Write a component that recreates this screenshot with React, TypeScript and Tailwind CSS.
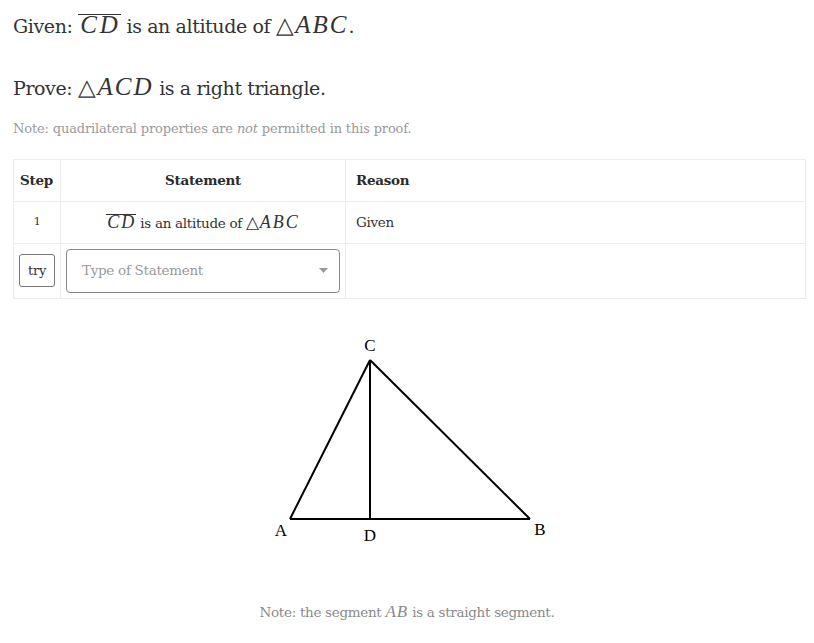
import React from 'react';

const serif = { fontFamily: '"DejaVu Serif", "Liberation Serif", serif' };

function M({ children }: { children: React.ReactNode }) {
  return (
    <span className="italic" style={{ fontFamily: '"Liberation Serif", serif' }}>
      {children}
    </span>
  );
}

function Tri({ size }: { size: string }) {
  return (
    <span style={{ fontFamily: '"DejaVu Sans", sans-serif' }} className={`not-italic font-light ${size}`}>
      △
    </span>
  );
}

function Seg({ children }: { children: React.ReactNode }) {
  return <span className="border-t border-current pt-px leading-none">{children}</span>;
}

export default function App() {
  return (
    <div className="bg-white min-h-[643px] px-[13px] pt-[10px] text-[#333]" style={serif}>
      <p className="text-[19px] h-[30px] leading-[30px] tracking-[-0.4px]">
        Given: <M><Seg><span className="text-[25px] tracking-[3px] pl-[2px]">CD</span></Seg></M> is an altitude of{' '}
        <M><Tri size="text-[23px] pr-[2px]" /><span className="text-[25px] tracking-[2px]">ABC</span></M>.
      </p>
      <p className="text-[19px] mt-[32px] h-[30px] leading-[30px] tracking-[-0.4px]">
        Prove: <M><Tri size="text-[23px] pr-[2px]" /><span className="text-[25px] tracking-[2px]">ACD</span></M> is a right triangle.
      </p>
      <p className="text-[13px] text-[#9a9a9a] mt-[17px] tracking-[-0.15px]">
        Note: quadrilateral properties are <em>not</em> permitted in this proof.
      </p>

      <table className="mt-[20px] w-[793px] border-collapse border border-[#ececec] text-[13.5px] tracking-[-0.3px]">
        <thead>
          <tr className="h-[42px]">
            <th className="w-[47px] border border-[#ececec] text-left px-[6px] font-bold text-[#2b2b2b]">Step</th>
            <th className="w-[285px] border border-[#ececec] text-center font-bold text-[#2b2b2b]">Statement</th>
            <th className="border border-[#ececec] text-left px-[10px] font-bold text-[#2b2b2b]">Reason</th>
          </tr>
        </thead>
        <tbody>
          <tr className="h-[42px]">
            <td className="border border-[#ececec] text-center text-[11px]">1</td>
            <td className="border border-[#ececec] text-center">
              <M><Seg><span className="text-[18px] tracking-[2px] pl-[1px]">CD</span></Seg></M> is an altitude of{' '}
              <M><Tri size="text-[17px] pr-[1px]" /><span className="text-[18px] tracking-[2px]">ABC</span></M>
            </td>
            <td className="border border-[#ececec] px-[10px]">Given</td>
          </tr>
          <tr className="h-[55px]">
            <td className="border border-[#ececec] px-[5px]">
              <button className="w-[36px] h-[33px] border border-[#777] rounded-[3px] text-[13px] bg-white" style={serif}>try</button>
            </td>
            <td className="border border-[#ececec] px-[5px]">
              <div className="h-[44px] border border-[#888] rounded-[4px] flex items-center justify-between pl-[15px] pr-[11px] text-[#999] text-[13.5px]">
                <span>Type of Statement</span>
                <svg width="9" height="5" viewBox="0 0 9 5"><path d="M0 0 L9 0 L4.5 5 Z" fill="#999" /></svg>
              </div>
            </td>
            <td className="border border-[#ececec]"></td>
          </tr>
        </tbody>
      </table>

      <div className="flex justify-center mt-[21px]">
        <svg width="320" height="240" viewBox="0 0 320 240" style={{ fontFamily: '"Liberation Serif", serif' }}>
          <line x1="43" y1="199" x2="123" y2="40" stroke="black" strokeWidth="2" />
          <line x1="123" y1="40" x2="283" y2="199" stroke="black" strokeWidth="2" />
          <line x1="43" y1="199" x2="283" y2="199" stroke="black" strokeWidth="2" />
          <line x1="123" y1="40" x2="123" y2="199" stroke="black" strokeWidth="2" />
          <text x="123" y="31" fontSize="17" textAnchor="middle">C</text>
          <text x="34" y="216" fontSize="17" textAnchor="middle">A</text>
          <text x="123" y="221" fontSize="17" textAnchor="middle">D</text>
          <text x="293" y="215" fontSize="17" textAnchor="middle">B</text>
        </svg>
      </div>

      <p className="text-center text-[13.5px] text-[#8a8a8a] mt-[39px] tracking-[-0.3px]">
        Note: the segment <M><span className="text-[17px] tracking-[1px]">AB</span></M> is a straight segment.
      </p>
    </div>
  );
}
